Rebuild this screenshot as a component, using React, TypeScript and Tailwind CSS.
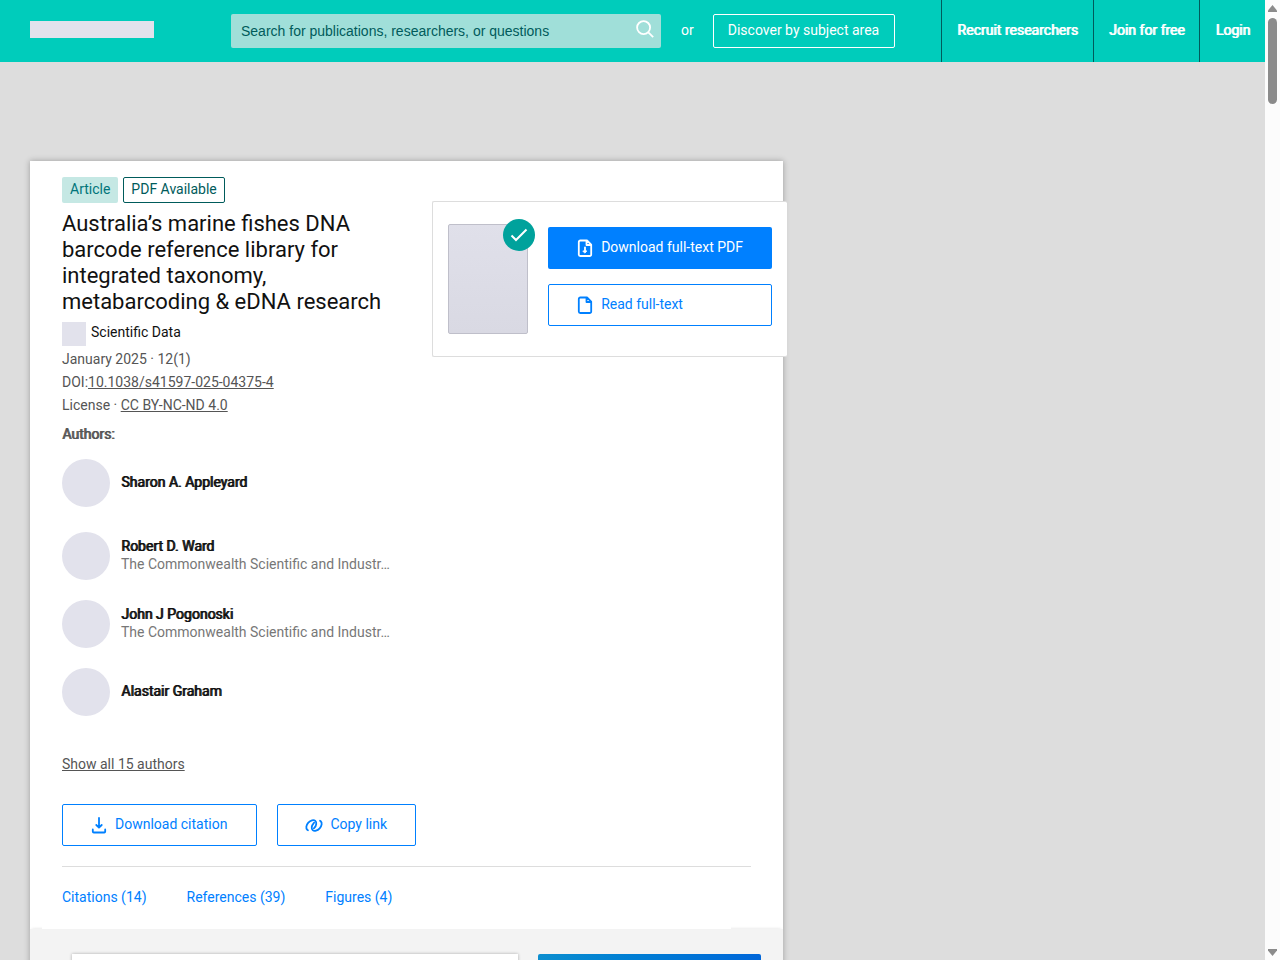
import type { ReactNode } from 'react';

const emphasis = '[text-shadow:1px_0_0_currentColor]';

type IconProps = { children: ReactNode };

function Icon({ children }: IconProps) {
  return (
    <svg
      className="size-5 shrink-0"
      viewBox="0 0 20 20"
      fill="none"
      stroke="currentColor"
      strokeWidth="1.8"
      strokeLinejoin="round"
      strokeLinecap="round"
      aria-hidden="true"
    >
      {children}
    </svg>
  );
}

const pagePath =
  'M12 2.500H5.300a1.500 1.500 0 0 0-1.500 1.500v12.500A1.500 1.500 0 0 0 5.300 18h9.400a1.500 1.500 0 0 0 1.500-1.500V6.700zM11.500 2.800v4.200h4.400';

const authors = [
  { name: 'Sharon A. Appleyard', org: '' },
  { name: 'Robert D. Ward', org: 'The Commonwealth Scientific and Industr…' },
  { name: 'John J Pogonoski', org: 'The Commonwealth Scientific and Industr…' },
  { name: 'Alastair Graham', org: '' },
];

function Header() {
  return (
    <header className="flex h-[62px] shrink-0 items-center bg-[#00ccbb] text-white">
      <a href="#home" aria-label="Home" className="mb-1 ml-[30px] block h-[17px] w-[124px] bg-[#e2e2ec]" />
      <form className="ml-[77px] flex h-[34px] w-[430px] items-center rounded-xs bg-[#a0dfd9]">
        <input
          type="search"
          aria-label="Search"
          placeholder="Search for publications, researchers, or questions"
          className="h-full min-w-0 flex-1 bg-transparent px-2.5 font-['Liberation_Sans',sans-serif] text-sm text-[#005b5b] outline-none placeholder:text-[#005b5b]"
        />
        <button type="submit" aria-label="Submit search" className="mr-1.5 mb-1">
          <svg className="size-5" viewBox="0 0 20 20" fill="none" stroke="currentColor" strokeWidth="1.8" aria-hidden="true">
            <circle cx="8.600" cy="8.600" r="6.500" />
            <path d="M13.300 13.300 18.200 18.200" />
          </svg>
        </button>
      </form>
      <span className="mr-[19px] ml-5 pb-0.5">or</span>
      <a href="#topics" className="flex h-[34px] items-center rounded-xs border border-white pr-[15px] pb-0.5 pl-3.5">
        Discover by subject area
      </a>
      <nav className={`ml-auto flex h-full ${emphasis}`}>
        {['Recruit researchers', 'Join for free', 'Login'].map((label) => (
          <a key={label} href="#account" className="flex items-center border-l border-[#005b5b] px-[15px] pb-0.5">
            {label}
          </a>
        ))}
      </nav>
    </header>
  );
}

function FullTextCard() {
  return (
    <aside className="mt-6 -mr-9 flex h-[156px] w-[355px] shrink-0 rounded-xs border border-r-0 border-[#dddddd] bg-white p-[15px] pt-[22px]">
      <div className="relative h-[110px] w-20 rounded-xs border border-[#bfbfca] bg-linear-to-b from-[#e0e0ea] to-[#d9d9e3]">
        <span className="absolute -top-1.5 -right-2 flex size-8 items-center justify-center rounded-full bg-[#00a29c] text-white">
          <svg className="size-5" viewBox="0 0 20 20" fill="none" stroke="currentColor" strokeWidth="2" aria-hidden="true">
            <path d="m2.500 10.500 4.500 4.500L17.500 4.500" />
          </svg>
        </span>
      </div>
      <div className="mt-[3px] ml-5 flex w-56 flex-col gap-[15px]">
        <button type="button" className="flex h-[42px] items-center gap-1.5 rounded-xs bg-[#0080ff] px-[27px] text-white">
          <Icon>
            <path d={pagePath} />
            <path d="M10 9.500v4" />
            <path d="M8.200 13h3.600L10 14.800z" fill="currentColor" strokeWidth="1" />
          </Icon>
          <span className="pb-0.5">Download full-text PDF</span>
        </button>
        <button type="button" className="flex h-[42px] items-center gap-1.5 rounded-xs border border-[#0080ff] px-[26px] text-[#0080ff]">
          <Icon>
            <path d={pagePath} />
          </Icon>
          <span className="pb-0.5">Read full-text</span>
        </button>
      </div>
    </aside>
  );
}

function Publication() {
  return (
    <section className="px-8 pt-4">
      <div className="flex items-start justify-between">
        <div className="w-[330px] text-[#555555]">
          <div className="flex gap-[5px]">
            <span className="h-[26px] rounded-xs bg-[#c5e8e4] px-2 leading-6 text-[#00757a]">Article</span>
            <span className="h-[26px] rounded-xs border border-[#005b5b] px-[7px] leading-[22px] text-[#005b5b]">PDF Available</span>
          </div>
          <h1 className="mt-2 text-[22px] leading-[26px] text-[#111111]">
            Australia’s marine fishes DNA barcode reference library for integrated taxonomy, metabarcoding &amp; eDNA research
          </h1>
          <div className="mt-[7px] flex h-6 gap-[5px]">
            <span className="size-6 bg-[#e2e2ec]" />
            <a href="#journal" className="leading-5 text-[#111111]">Scientific Data</a>
          </div>
          <div className="mt-0.5 leading-[23px]">
            <p>January 2025 · 12(1)</p>
            <p>DOI:<a href="#doi" className="underline">10.1038/s41597-025-04375-4</a></p>
            <p>License · <a href="#license" className="underline">CC BY-NC-ND 4.0</a></p>
          </div>
          <h2 className={`mt-1.5 leading-[23px] ${emphasis}`}>Authors:</h2>
          <ul className="mt-[13px]">
            {authors.map((a) => (
              <li key={a.name} className="mb-5 flex h-12 items-center gap-[11px] first:mb-[25px]">
                <span className="size-12 shrink-0 rounded-full bg-[#e2e2ec]" />
                <div className="pb-0.5 leading-[18px] whitespace-nowrap">
                  <a href="#author" className={`text-[#111111] ${emphasis}`}>{a.name}</a>
                  {a.org && <p className="text-[#777777]">{a.org}</p>}
                </div>
              </li>
            ))}
          </ul>
        </div>
        <FullTextCard />
      </div>
      <a href="#authors" className="mt-4 inline-block leading-6 text-[#555555] underline">Show all 15 authors</a>
      <div className="mt-7 flex gap-5 text-[#0080ff]">
        <button type="button" className="flex h-[42px] items-center gap-1.5 rounded-xs border border-[#0080ff] pr-[29px] pl-[26px]">
          <Icon>
            <path d="M10 3v9.500M7.300 10l2.700 2.700 2.700-2.700M3.800 14.500v2a1 1 0 0 0 1 1h10.400a1 1 0 0 0 1-1v-2" />
          </Icon>
          <span className="pb-0.5">Download citation</span>
        </button>
        <button type="button" className="flex h-[42px] items-center gap-1.5 rounded-xs border border-[#0080ff] pr-7 pl-[26px]">
          <Icon>
            <ellipse cx="7.300" cy="10.300" rx="6" ry="4" transform="rotate(-48 7.300 10.300)" pathLength="100" strokeDasharray="27 20 53 0" />
            <ellipse cx="12.700" cy="10.700" rx="6" ry="4" transform="rotate(132 12.700 10.700)" pathLength="100" strokeDasharray="27 20 53 0" />
          </Icon>
          <span className="pb-0.5">Copy link</span>
        </button>
      </div>
      <hr className="mt-5 border-[#dddddd]" />
      <nav className="relative mr-5 -ml-5 flex gap-10 bg-white pt-[19px] pb-5 pl-5 leading-[23px] text-[#0080ff]">
        <a href="#citations">Citations (14)</a>
        <a href="#references">References (39)</a>
        <a href="#figures">Figures (4)</a>
      </nav>
    </section>
  );
}

export default function App() {
  return (
    <div className="flex h-screen overflow-hidden bg-[#dddddd] font-[Roboto,sans-serif] text-sm">
      <div className="flex min-w-0 flex-1 flex-col">
        <Header />
        <main className="mx-[30px] mt-[99px]">
          <div className="w-5/8 bg-white shadow-[0_0_6px_rgba(0,0,0,0.3)]">
            <Publication />
            <div className="flex h-96 gap-5 bg-[#f3f3f3] pt-[25px] pr-[22px] pl-[42px] shadow-[0_-2px_3px_-2px_#dddddd]">
              <div className="flex-1 bg-white shadow-[0_0_3px_rgba(0,0,0,0.3)]" />
              <div className="w-[223px] rounded-xs bg-linear-to-r from-[#0d8ecf] to-[#0066d9]" />
            </div>
          </div>
        </main>
      </div>
      <div className="flex w-[15px] shrink-0 flex-col items-center bg-[#fcfcfc] text-[#8b8b8b]" aria-hidden="true">
        <svg className="mt-[5px] h-[7px] w-[9px]" viewBox="0 0 9 7" fill="currentColor"><path d="M4.500 0 9 5.500V7H0V5.500z" /></svg>
        <div className="mt-1.5 h-[86px] w-[9px] rounded-full bg-[#8b8b8b]" />
        <svg className="mt-auto mb-1 h-[7px] w-[9px]" viewBox="0 0 9 7" fill="currentColor"><path d="M4.500 7 9 1.500V0H0v1.500z" /></svg>
      </div>
    </div>
  );
}
